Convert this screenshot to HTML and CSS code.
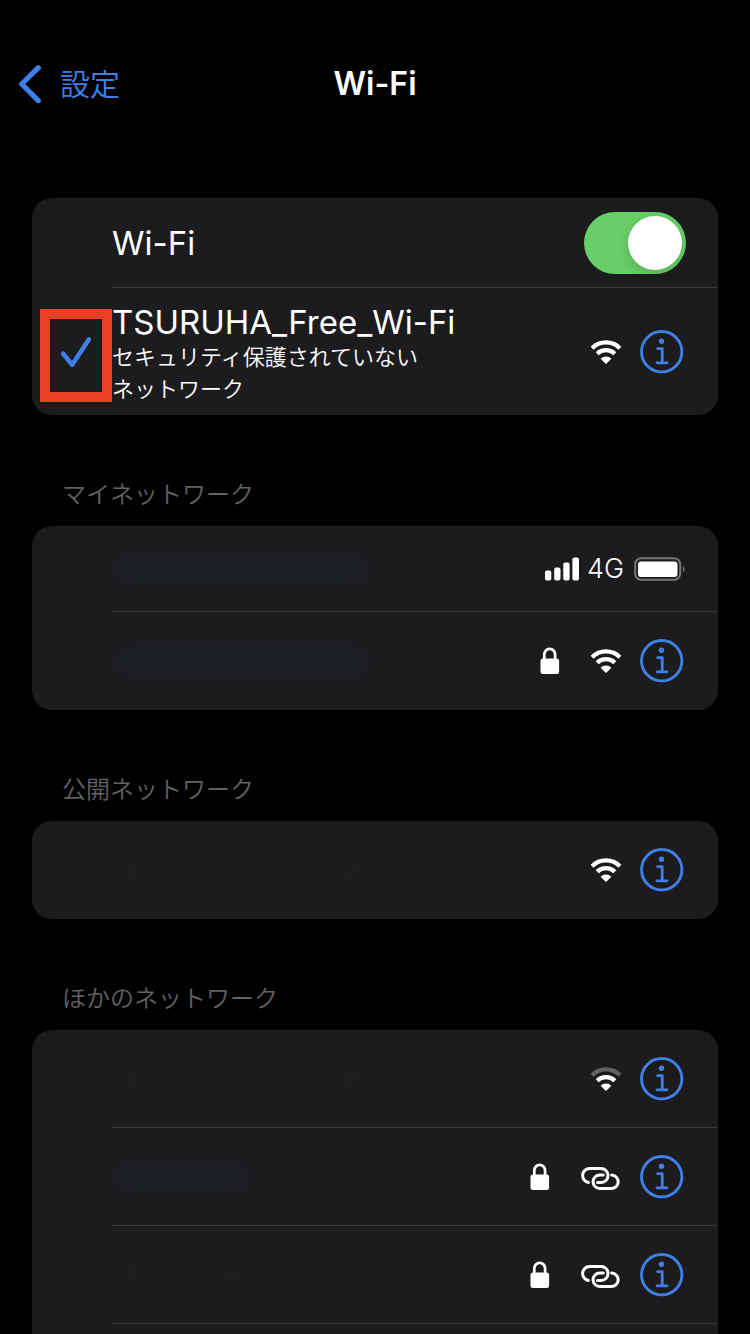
FILE: index.html
```html
<!DOCTYPE html>
<html lang="ja">
<head>
<meta charset="utf-8">
<meta name="viewport" content="width=device-width, initial-scale=1">
<title>Wi-Fi</title>
<link rel="stylesheet" href="styles.css">
</head>
<body>
<svg class="sprite" aria-hidden="true">
  <symbol id="wifi-core" viewBox="0 0 32 24">
    <path d="M7.200 13.800a12.600 12.600 0 0 1 17.600 0" fill="none" stroke="currentColor" stroke-width="4.300"/>
    <path d="M16 24l-5.400-5.200a7.600 7.600 0 0 1 10.800 0z" fill="currentColor"/>
  </symbol>
  <symbol id="wifi-arc" viewBox="0 0 32 24">
    <path d="M2.100 8.200a19.700 19.700 0 0 1 27.800 0" fill="none" stroke="currentColor" stroke-width="4.200"/>
  </symbol>
  <symbol id="info" viewBox="0 0 44 44">
    <circle cx="21.700" cy="21.700" r="20.200" fill="none" stroke="currentColor" stroke-width="2.900"/>
    <circle cx="21.500" cy="11.300" r="2.700" fill="currentColor"/>
    <path d="M17.600 18.600h4.600v14M17 32.800h10" fill="none" stroke="currentColor" stroke-width="2.800" stroke-linecap="round" stroke-linejoin="round"/>
  </symbol>
  <symbol id="lock" viewBox="0 0 20 28">
    <rect x="0.500" y="11.500" width="18.600" height="15.500" rx="2.500" fill="currentColor"/>
    <path d="M4.300 12.500V7.500a5.400 5.700 0 0 1 10.800 0v5" fill="none" stroke="currentColor" stroke-width="2.700"/>
  </symbol>
  <symbol id="chain" viewBox="0 0 42 28">
    <g fill="none" stroke="currentColor" stroke-width="3" stroke-linecap="round">
      <path d="M8.400 19.400A7 7 0 0 1 9.500 5.500H21a7 7 0 0 1 0 14h-3.500"/>
      <path d="M23.300 12h-3.500a6.750 6.750 0 0 0 0 13.500H31.200a6.750 6.750 0 0 0 .5-13.500"/>
    </g>
  </symbol>
</svg>

<div class="screen">
  <header class="nav">
    <a class="back" href="#">
      <svg class="back-icon" viewBox="0 0 24 40" aria-hidden="true"><path d="M20.300 3.700L3.700 20l16.600 16.600" fill="none" stroke="currentColor" stroke-width="5.200" stroke-linecap="round" stroke-linejoin="round"/></svg>
      <span>設定</span>
    </a>
    <h1 class="title">Wi-Fi</h1>
  </header>

  <main class="groups">
    <section class="card">
      <div class="row row-switch">
        <div class="lead"></div>
        <div class="body">
          <label class="name" for="wifi-switch">Wi-Fi</label>
          <input class="switch" id="wifi-switch" type="checkbox" role="switch" checked>
        </div>
      </div>
      <div class="row row-current">
        <div class="lead">
          <svg class="check" viewBox="0 0 32 32" aria-hidden="true"><path d="M3.200 17.800l9 11L28.800 3.500" fill="none" stroke="currentColor" stroke-width="4.600" stroke-linecap="round" stroke-linejoin="round"/></svg>
          <span class="marker"></span>
        </div>
        <div class="body">
          <div class="network">
            <div class="name">TSURUHA_Free_Wi-Fi</div>
            <div class="note">セキュリティ保護されていない<br>ネットワーク</div>
          </div>
          <svg class="wifi"><use href="#wifi-core"/><use href="#wifi-arc"/></svg>
          <button class="info" aria-label="詳細"><svg><use href="#info"/></svg></button>
        </div>
      </div>
    </section>

    <section class="group">
      <h2 class="heading">マイネットワーク</h2>
      <div class="card">
        <div class="row row-hotspot">
          <div class="lead"></div>
          <div class="body">
            <span class="smudge"></span>
            <svg class="bars" viewBox="0 0 36 24" aria-hidden="true" fill="currentColor">
              <rect x="1" y="13.500" width="6.300" height="10" rx="2"/><rect x="10.200" y="10.500" width="6.300" height="13" rx="2"/><rect x="19.300" y="5.500" width="6.300" height="18" rx="2"/><rect x="28.400" y="0.500" width="6.600" height="23" rx="2"/>
            </svg>
            <span class="carrier">4G</span>
            <svg class="battery" viewBox="0 0 52 24" aria-hidden="true">
              <rect x="1.200" y="1.200" width="45" height="21.600" rx="6" fill="none" stroke="#77777a" stroke-width="2"/>
              <rect x="4" y="4.500" width="39.500" height="15.500" rx="3" fill="#fff"/>
              <path d="M49 8.500q3 3.500 0 7z" fill="#77777a"/>
            </svg>
          </div>
        </div>
        <div class="row">
          <div class="lead"></div>
          <div class="body">
            <span class="smudge"></span>
            <svg class="lock"><use href="#lock"/></svg>
            <svg class="wifi"><use href="#wifi-core"/><use href="#wifi-arc"/></svg>
            <button class="info" aria-label="詳細"><svg><use href="#info"/></svg></button>
          </div>
        </div>
      </div>
    </section>

    <section class="group">
      <h2 class="heading">公開ネットワーク</h2>
      <div class="card">
        <div class="row">
          <div class="lead"></div>
          <div class="body">
            <span class="smudge smudge-faint"></span>
            <svg class="wifi"><use href="#wifi-core"/><use href="#wifi-arc"/></svg>
            <button class="info" aria-label="詳細"><svg><use href="#info"/></svg></button>
          </div>
        </div>
      </div>
    </section>

    <section class="group">
      <h2 class="heading">ほかのネットワーク</h2>
      <div class="card">
        <div class="row">
          <div class="lead"></div>
          <div class="body">
            <span class="smudge smudge-faint"></span>
            <svg class="wifi"><use href="#wifi-core"/><use class="weak" href="#wifi-arc"/></svg>
            <button class="info" aria-label="詳細"><svg><use href="#info"/></svg></button>
          </div>
        </div>
        <div class="row">
          <div class="lead"></div>
          <div class="body">
            <span class="smudge smudge-short"></span>
            <svg class="lock"><use href="#lock"/></svg>
            <svg class="chain"><use href="#chain"/></svg>
            <button class="info" aria-label="詳細"><svg><use href="#info"/></svg></button>
          </div>
        </div>
        <div class="row">
          <div class="lead"></div>
          <div class="body">
            <span class="smudge smudge-faint smudge-short"></span>
            <svg class="lock"><use href="#lock"/></svg>
            <svg class="chain"><use href="#chain"/></svg>
            <button class="info" aria-label="詳細"><svg><use href="#info"/></svg></button>
          </div>
        </div>
        <div class="row">
          <div class="lead"></div>
          <div class="body"></div>
        </div>
      </div>
    </section>
  </main>
</div>
</body>
</html>
```

FILE: styles.css
```css
* {
  box-sizing: border-box;
}

body {
  margin: 0;
  background: #000;
  color: #fff;
  font-family: Inter, "Noto Sans CJK JP", sans-serif;
}

.sprite {
  position: absolute;
  width: 0;
  height: 0;
}

.screen {
  height: 100vh;
  overflow-y: auto;
  scrollbar-width: none;
}

.nav {
  display: grid;
  grid-template-columns: 1fr auto 1fr;
  align-items: center;
  height: 88px;
  margin: 40px 0 70px;
  padding: 0 18px;
}

.back {
  display: flex;
  align-items: center;
  gap: 18px;
  color: #3f80e8;
  font-size: 30px;
  font-weight: 350;
  line-height: 40px;
  text-decoration: none;
}

.back-icon {
  width: 24px;
  height: 40px;
}

.title {
  margin: 0;
  font-size: 32px;
  font-weight: 600;
  line-height: 40px;
}

.groups {
  padding: 0 32px;
}

.card {
  overflow: hidden;
  border-radius: 20px;
  background: #1c1c1e;
}

.heading {
  margin: 0;
  padding: 63px 30px 15px;
  color: #626264;
  font-size: 24px;
  font-weight: 350;
  line-height: 33px;
}

.row {
  display: flex;
  min-height: 98px;
}

.row-switch {
  min-height: 90px;
}

.row-current {
  min-height: 127px;
}

.row-hotspot {
  min-height: 86px;
}

.row:not(:last-child) .body {
  border-bottom: 1px solid #3b3b3e;
}

.lead {
  position: relative;
  display: flex;
  flex: 0 0 80px;
  align-items: center;
  justify-content: center;
  padding-left: 8px;
}

.check {
  width: 32px;
  height: 32px;
  color: #3f80e8;
}

/* Call-out frame drawn over the tick column */
.marker {
  position: absolute;
  top: 21px;
  right: 0;
  bottom: 13px;
  left: 8px;
  border: 10px solid #ea4025;
}

.body {
  display: flex;
  flex: 1;
  align-items: center;
  padding-right: 34px;
}

.row-switch .body,
.row-hotspot .body {
  padding-right: 32px;
}

.name {
  flex: 1;
  font-size: 33px;
  line-height: 38px;
}

.network {
  flex: 1;
  padding-top: 4px;
}

.note {
  font-size: 22px;
  font-weight: 350;
  line-height: 32px;
}

.switch {
  display: flex;
  width: 102px;
  height: 62px;
  margin: 0;
  padding: 4px;
  border-radius: 31px;
  background: #39393d;
  appearance: none;
}

.switch::before {
  width: 54px;
  height: 54px;
  border-radius: 50%;
  background: #fff;
  box-shadow: 0 4px 12px rgba(0, 0, 0, 0.15);
  content: "";
}

.switch:checked {
  justify-content: flex-end;
  overflow: hidden;
  background: #68ce67;
}

.wifi {
  width: 32px;
  height: 24px;
  margin-right: 18px;
}

.weak {
  color: #626264;
}

.lock {
  width: 20px;
  height: 28px;
  margin-right: 30px;
}

.chain {
  width: 42px;
  height: 28px;
  margin-right: 18px;
}

.info {
  width: 44px;
  height: 44px;
  padding: 0;
  border: 0;
  background: none;
  color: #3f80e8;
}

.info svg {
  display: block;
  width: 44px;
  height: 44px;
}

.bars {
  width: 36px;
  height: 24px;
}

.carrier {
  margin: 0 10px 0 7px;
  font-size: 27px;
  font-weight: 300;
  line-height: 32px;
}

.battery {
  width: 52px;
  height: 24px;
}

/* Blurred-out network names */
.smudge {
  width: 260px;
  height: 32px;
  margin-right: auto;
  border-radius: 16px;
  background: #1d2023;
  filter: blur(8px);
}

.smudge-faint {
  background: #1e1e1f;
}

.smudge-short {
  width: 140px;
}
```
